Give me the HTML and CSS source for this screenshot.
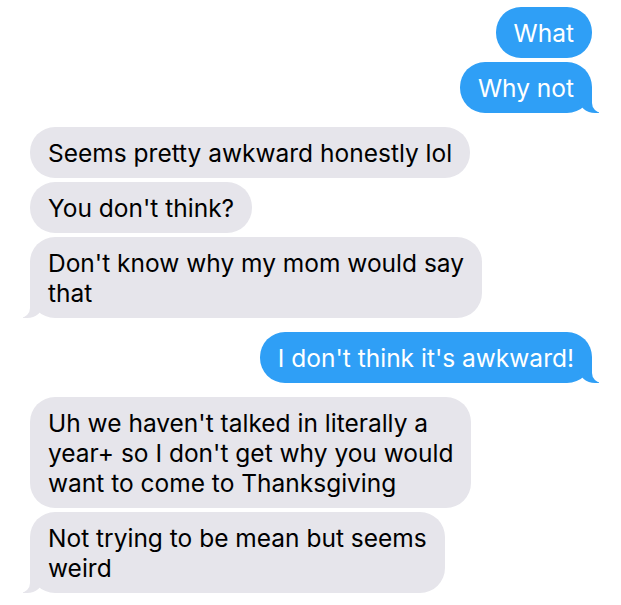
FILE: index.html
```html
<!DOCTYPE html>
<html>
<head>
<meta charset="utf-8">
<link rel="stylesheet" href="styles.css">
</head>
<body>
<div class="thread">
  <div class="group">
    <div class="bubble sent">What</div>
    <div class="bubble sent tail">Why not</div>
  </div>
  <div class="group">
    <div class="bubble recv">Seems pretty awkward honestly lol</div>
    <div class="bubble recv">You don't think?</div>
    <div class="bubble recv tail">Don't know why my mom would say<br>that</div>
  </div>
  <div class="group">
    <div class="bubble sent tail">I don't think it's awkward!</div>
  </div>
  <div class="group">
    <div class="bubble recv">Uh we haven't talked in literally a<br>year+ so I don't get why you would<br>want to come to Thanksgiving</div>
    <div class="bubble recv tail">Not trying to be mean but seems<br>weird</div>
  </div>
</div>
</body>
</html>
```
FILE: styles.css
```css
html, body {
  margin: 0;
  padding: 0;
  background: #ffffff;
}
.thread {
  width: 621px;
  height: 605px;
  box-sizing: border-box;
  padding: 7px 29px 0 30px;
  display: flex;
  flex-direction: column;
  gap: 14px;
  overflow: hidden;
  font-family: "Inter", "Liberation Sans", sans-serif;
  font-size: 24.5px;
}
.group {
  display: flex;
  flex-direction: column;
  gap: 4px;
}
.bubble {
  position: relative;
  padding: 11px 18px 10px;
  line-height: 30px;
  border-radius: 25px;
  white-space: nowrap;
}
.sent {
  align-self: flex-end;
  background: #2f9ff6;
  color: #ffffff;
}
.recv {
  align-self: flex-start;
  background: #e6e5eb;
  color: #000000;
}
.sent.tail::before {
  content: "";
  position: absolute;
  right: -7px;
  bottom: 0;
  width: 20px;
  height: 25px;
  background: #2f9ff6;
  border-bottom-left-radius: 16px 14px;
}
.sent.tail::after {
  content: "";
  position: absolute;
  right: -26px;
  bottom: 0;
  width: 26px;
  height: 25px;
  background: #ffffff;
  border-bottom-left-radius: 10px;
}
.recv.tail::before {
  content: "";
  position: absolute;
  left: -7px;
  bottom: 0;
  width: 20px;
  height: 25px;
  background: #e6e5eb;
  border-bottom-right-radius: 16px 14px;
}
.recv.tail::after {
  content: "";
  position: absolute;
  left: -26px;
  bottom: 0;
  width: 26px;
  height: 25px;
  background: #ffffff;
  border-bottom-right-radius: 10px;
}
```
